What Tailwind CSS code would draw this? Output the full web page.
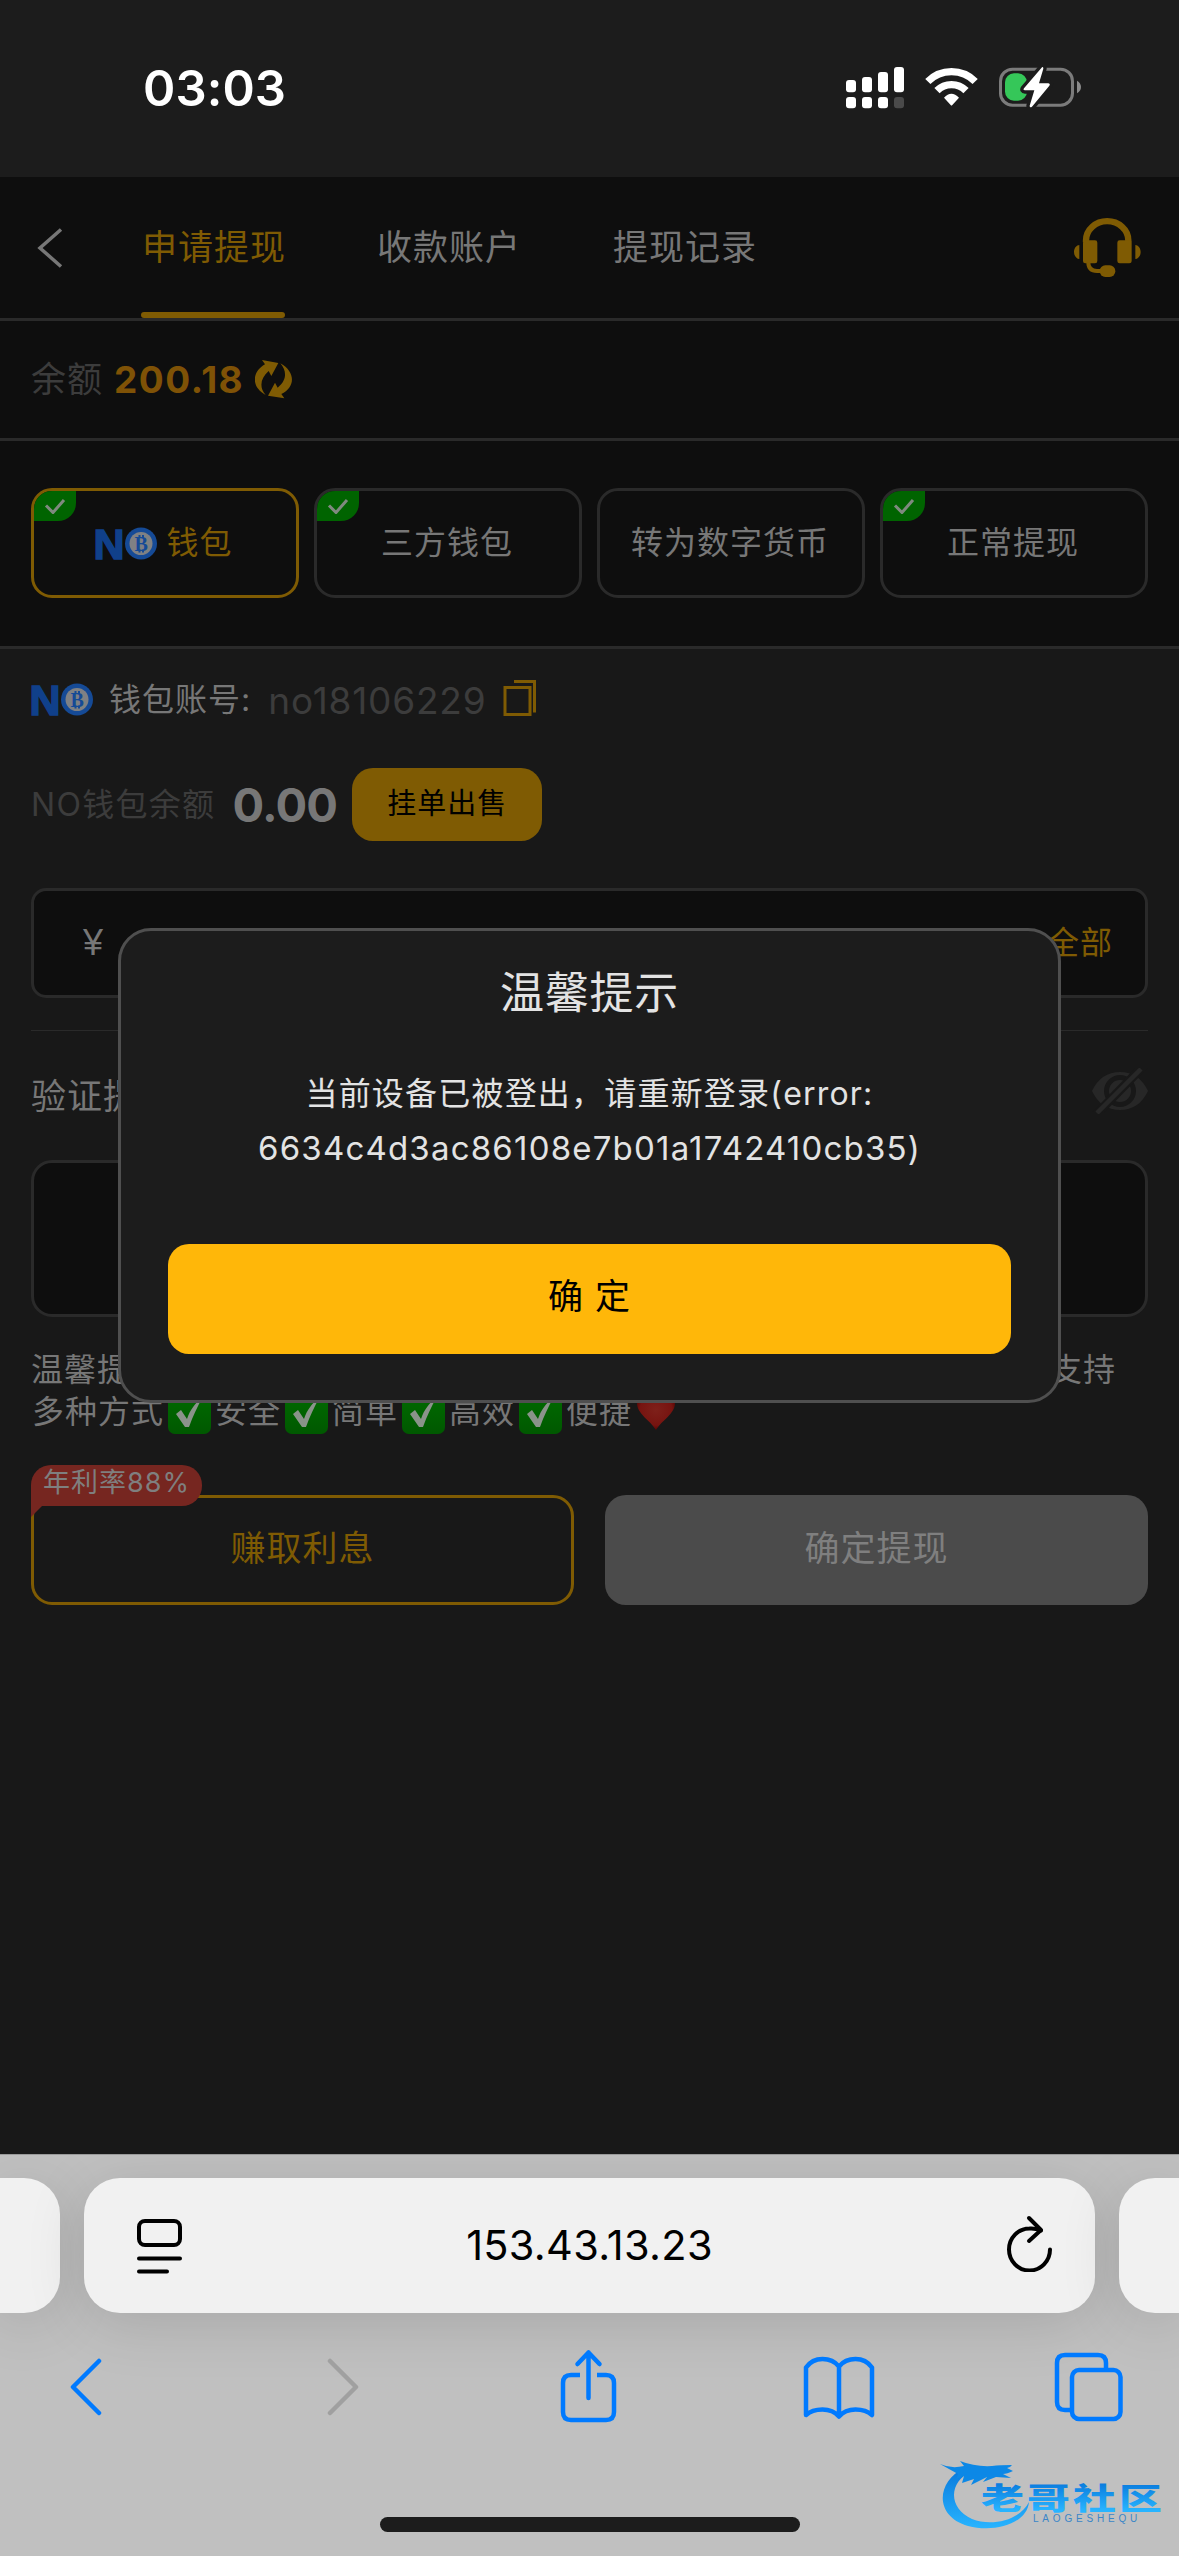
<!DOCTYPE html>
<html lang="zh-CN">
<head>
<meta charset="utf-8">
<title>申请提现</title>
<script src="https://cdn.jsdelivr.net/npm/@tailwindcss/browser@4"></script>
</head>
<body class="w-[1179px] h-[2556px] overflow-hidden bg-[#181818] font-['Inter','Noto_Sans_CJK_SC',sans-serif] leading-none text-[#777777] whitespace-nowrap">
<svg class="absolute h-0 w-0">
  <defs>
    <linearGradient id="green" x1="0" y1="0" x2="0" y2="1"><stop offset="0" stop-color="#006c00"/><stop offset="1" stop-color="#005800"/></linearGradient>
    <radialGradient id="red" cx=".5" cy=".45" r=".6"><stop offset="0" stop-color="#7e201a"/><stop offset=".7" stop-color="#771410"/><stop offset="1" stop-color="#4c0000"/></radialGradient>
    <linearGradient id="blue" x1="0" y1="0" x2="0" y2="1"><stop offset="0" stop-color="#0878dc"/><stop offset="1" stop-color="#28b4ff"/></linearGradient>
    <linearGradient id="title-blue" gradientUnits="userSpaceOnUse" x1="0" y1="-30" x2="0" y2="2"><stop offset="0" stop-color="#0878dc"/><stop offset="1" stop-color="#28b4ff"/></linearGradient>
    <symbol id="no-logo" viewBox="0 0 62 33">
      <text x="-1.5" y="31.5" font-family="Liberation Sans" font-weight="700" font-size="43" letter-spacing="0" textLength="31" lengthAdjust="spacingAndGlyphs" fill="#10408a" stroke="#10408a" stroke-width="1.6">N</text>
      <circle cx="46" cy="16.5" r="16" fill="#154a96"/>
      <circle cx="46" cy="16.5" r="11.500" fill="#7f8184"/>
      <text x="39.6" y="23.5" font-family="Liberation Serif" font-weight="700" font-size="20" fill="#154a96">B</text>
      <path d="M44.500 8v3M48 8v3M44.500 22.500v3M48 22.500v3" stroke="#154a96" stroke-width="2"/>
    </symbol>
    <symbol id="emoji-check" viewBox="0 0 43 43"><rect width="43" height="43" rx="7" fill="url(#green)"/><path d="M8 23l5-4 6 9C22 19 27 12 35 6c-6 10-10 19-14 30h-4z" fill="#8a938a"/></symbol>
  </defs>
</svg>

<!-- status bar -->
<div class="flex h-[177px] items-center bg-[#1c1c1c] pl-[143px] text-white">
  <div class="w-[703px] text-[49px] font-semibold tracking-[0.1px]">03:03</div>
  <svg class="mb-[1px] h-[42px] w-[59px]" viewBox="78 80 177 126" fill="#fff">
    <rect x="78" y="119" width="30" height="37" rx="9"/><rect x="126" y="110" width="30" height="46" rx="9"/><rect x="174" y="95" width="30" height="61" rx="9"/><rect x="222" y="80" width="30" height="76" rx="9"/>
    <rect x="78" y="170" width="30" height="34" rx="9"/><rect x="126" y="170" width="30" height="34" rx="9"/><rect x="174" y="170" width="30" height="34" rx="9"/><rect x="222" y="170" width="30" height="34" rx="9" fill="#4a4a4a"/>
  </svg>
  <svg class="mb-[3px] ml-[20px] h-[40px] w-[53px]" viewBox="315 83 159 120">
    <g fill="none" stroke="#fff" stroke-width="22"><path d="M323.500 126.500A100 100 0 0 1 465.500 126.500"/><path d="M351 154A61 61 0 0 1 438 154"/></g>
    <path d="M372 175q22-24 45 0L397 197q-3 3-5 0z" fill="#fff"/>
  </svg>
  <svg class="mb-[3px] ml-[20px] h-[42px] w-[84px]" viewBox="534 79 252 126">
    <rect x="541.500" y="88.500" width="216" height="108" rx="36" fill="none" stroke="#7b7b7b" stroke-width="9"/>
    <rect x="555" y="101" width="66" height="82" rx="27" fill="#35c759"/>
    <path d="M771 123q12 7 12 19t-12 19z" fill="#8a8a8a"/>
    <path d="M666 83L612 146q-4 6 3 6h28l-14 46q0 8 7 3L688 138q4-6-3-7h-28l13-44q0-8-4-4z" fill="#fff" stroke="#1c1c1c" stroke-width="20" stroke-linejoin="round"/>
    <path d="M666 83L612 146q-4 6 3 6h28l-14 46q0 8 7 3L688 138q4-6-3-7h-28l13-44q0-8-4-4z" fill="#fff"/>
  </svg>
</div>

<!-- page header -->
<header class="flex h-[144px] items-stretch border-b-3 border-[#2a2a2a] bg-[#0e0e0e] pl-[37px] text-[35px] tracking-[1px]">
  <svg class="mt-[51px] h-[40px] w-[26px]" viewBox="0 0 26 40" fill="none" stroke="#777777" stroke-width="3.500"><path d="M24 1.500L3 20l21 18.500"/></svg>
  <div class="ml-[78px] flex w-[144px] flex-col justify-between text-[#7f5b03]"><span class="pl-[1px] pt-[53px]">申请提现</span><div class="h-[6px] rounded-full bg-[#7f5b03]"></div></div>
  <div class="ml-[92px] pt-[53px]">收款账户</div>
  <div class="ml-[92px] pt-[53px]">提现记录</div>
  <svg class="mt-[40px] ml-[315px] h-[62px] w-[70px]" viewBox="755 530 210 186" fill="#7f5b03">
    <path d="M797 606v-6a63 57 0 0 1 127 0v6" fill="none" stroke="#7f5b03" stroke-width="19"/>
    <rect x="788" y="600" width="43" height="69" rx="7"/><rect x="891" y="600" width="43" height="69" rx="7"/>
    <path d="M777 614v42c-8 0-16-9-16-21s8-21 16-21zM945 614v42c8 0 16-9 16-21s-8-21-16-21z"/>
    <path d="M804 666q0 26 26 26h20" fill="none" stroke="#7f5b03" stroke-width="12"/>
    <rect x="838" y="675" width="47" height="35" rx="17"/>
  </svg>
</header>

<!-- balance -->
<section class="flex h-[120px] items-center border-b-3 border-[#2a2a2a] bg-[#0e0e0e] pl-[31px]">
  <span class="text-[35px] tracking-[1px] text-[#3c3c3c]">余额</span>
  <span class="ml-[11px] text-[37px] font-bold tracking-[1.5px] text-[#7f5206]">200.18</span>
  <svg class="ml-[11px] h-[39px] w-[37px]" viewBox="692 29 111 117" fill="#7f5b03">
    <path d="M713 29L762 38 741 77 733 62C708 84 704 111 724 134 678 109 684 63 722 42z"/>
    <path d="M780 144L731 136 752 97 760 112C788 90 788 62 768 39 816 66 812 112 771 131z"/>
  </svg>
</section>

<!-- withdrawal methods -->
<section class="flex h-[208px] items-start gap-[15px] border-b-3 border-[#2a2a2a] bg-[#0e0e0e] px-[31px] pt-[47px] text-[32px] tracking-[1px]">
  <div class="relative flex h-[110px] flex-1 items-center justify-center gap-[9px] rounded-[21px] border-3 border-[#7f5b03] pr-[2px] text-[#7f5b03]">
    <div class="absolute left-0 top-0 flex h-[30px] w-[42px] items-center justify-center rounded-br-[18px] rounded-tl-[18px] bg-[#006400]"><svg class="h-[16px] w-[22px]" viewBox="0 0 22 16" fill="none" stroke="#7f8a7f" stroke-width="3"><path d="M2 7.500l7 7L20 2"/></svg></div>
    <svg class="h-[33px] w-[62px]"><use href="#no-logo"/></svg><span>钱包</span>
  </div>
  <div class="relative flex h-[110px] flex-1 items-center justify-center rounded-[21px] border-3 border-[#2a2a2a] pr-[2px]">
    <div class="absolute left-0 top-0 flex h-[30px] w-[42px] items-center justify-center rounded-br-[18px] rounded-tl-[18px] bg-[#006400]"><svg class="h-[16px] w-[22px]" viewBox="0 0 22 16" fill="none" stroke="#7f8a7f" stroke-width="3"><path d="M2 7.500l7 7L20 2"/></svg></div>
    三方钱包
  </div>
  <div class="flex h-[110px] flex-1 items-center justify-center rounded-[21px] border-3 border-[#2a2a2a] pr-[2px]">转为数字货币</div>
  <div class="relative flex h-[110px] flex-1 items-center justify-center rounded-[21px] border-3 border-[#2a2a2a] pr-[2px]">
    <div class="absolute left-0 top-0 flex h-[30px] w-[42px] items-center justify-center rounded-br-[18px] rounded-tl-[18px] bg-[#006400]"><svg class="h-[16px] w-[22px]" viewBox="0 0 22 16" fill="none" stroke="#7f8a7f" stroke-width="3"><path d="M2 7.500l7 7L20 2"/></svg></div>
    正常提现
  </div>
</section>

<!-- form -->
<main class="flex h-[1505px] flex-col px-[31px] text-[32px] tracking-[1px]">
  <div class="mt-[29px] flex h-[44px] items-center">
    <svg class="mb-[1px] h-[33px] w-[62px]"><use href="#no-logo"/></svg>
    <span class="ml-[16px]">钱包账号:</span>
    <span class="ml-[17px] text-[37px] tracking-[0.8px] text-[#3c3c3c]">no18106229</span>
    <svg class="mb-[4px] ml-[17px] h-[36px] w-[33px]" viewBox="0 0 33 36" fill="none" stroke="#7f5b03" stroke-width="3"><rect x="2" y="7.500" width="25" height="27"/><path d="M11 1.500h20.500v31"/></svg>
  </div>
  <div class="mt-[46px] flex h-[73px] items-center">
    <span class="tracking-[1.3px] text-[#3c3c3c]">NO钱包余额</span>
    <span class="ml-[17px] text-[47px] font-bold tracking-[-0.8px]">0.00</span>
    <div class="ml-[15px] flex h-[73px] w-[190px] items-center justify-center rounded-[21px] bg-[#7f5b03] pb-[3px] text-[29px] text-black">挂单出售</div>
  </div>
  <div class="mt-[47px] flex h-[110px] items-center justify-between rounded-[15px] border-3 border-[#2a2a2a] bg-[#0e0e0e] pl-[49px] pr-[32px]"><span class="font-['Liberation_Sans'] text-[36px]">¥</span><span class="text-[#7f5b03]">全部</span></div>
  <div class="mt-[32px] h-[1px] bg-[#2a2a2a]"></div>
  <div class="flex h-[129px] items-center justify-between text-[34px]">
    <span class="pt-[2px] text-[35px]">验证提现密码</span>
    <svg class="mb-[10px] h-[46px] w-[56px]" viewBox="0 0 56 46"><path d="M0 23Q9 4 28 4T56 23Q47 42 28 42T0 23z" fill="#272727"/><circle cx="28" cy="23" r="13.500" fill="none" stroke="#181818" stroke-width="5"/><path d="M10 44L54 -1M1 46L46 0" stroke="#181818" stroke-width="4"/><path d="M5 45L49 1" stroke="#272727" stroke-width="4.500"/></svg>
  </div>
  <div class="h-[157px] rounded-[21px] border-3 border-[#2a2a2a] bg-[#0e0e0e]"></div>
  <div class="mt-[32px] flex h-[42px] items-center justify-between pr-[32px]"><span>温馨提示：</span><span>支持</span></div>
  <div class="flex h-[42px] items-center pl-[1px]">
    <span>多种方式</span><svg class="mx-[4px] h-[43px] w-[43px]"><use href="#emoji-check"/></svg>
    <span>安全</span><svg class="mx-[4px] h-[43px] w-[43px]"><use href="#emoji-check"/></svg>
    <span>简单</span><svg class="mx-[4px] h-[43px] w-[43px]"><use href="#emoji-check"/></svg>
    <span>高效</span><svg class="mx-[4px] h-[43px] w-[43px]"><use href="#emoji-check"/></svg>
    <span>便捷</span><svg class="ml-[4px] h-[40px] w-[40px]" viewBox="0 0 40 40"><path d="M20 38C14 28 1 22 1 11 1-1 16-1 20 8 24-1 39-1 39 11 39 22 26 28 20 38z" fill="url(#red)"/></svg>
  </div>
  <div class="mt-[62px] flex gap-[31px] text-[35px]">
    <div class="relative flex h-[110px] w-[543px] items-center justify-center rounded-[21px] border-3 border-[#7f5b03] pb-[3px] text-[#7f5b03]">
      赚取利息
      <svg class="absolute -left-[3px] top-[5px] h-[14px] w-[12px]" viewBox="0 0 12 14"><path d="M0 0h12v2L0 14z" fill="#762620"/></svg>
      <div class="absolute -left-[3px] -top-[33px] flex h-[41px] w-[171px] items-center justify-center rounded-r-[20px] rounded-tl-[20px] bg-[#762620] pb-[6px] text-[27px] text-[#7f7f7f]">年利率88%</div>
    </div>
    <div class="flex h-[110px] w-[543px] items-center justify-center rounded-[21px] bg-[#4b4b4b] pb-[3px] text-[#7f7f7f]">确定提现</div>
  </div>
</main>

<!-- browser toolbar -->
<footer class="flex h-[402px] flex-col overflow-hidden border-t border-[#999999] bg-[#c0c0c0]">
  <div class="mt-[23px] flex h-[135px] shrink-0 gap-[24px]">
    <div class="w-[60px] rounded-r-[36px] bg-[#f1f1f1] shadow-[0_10px_60px_rgba(0,0,0,0.13)]"></div>
    <div class="flex w-[1011px] items-center justify-between rounded-[36px] bg-[#f1f1f1] pl-[52px] pr-[42px] text-black shadow-[0_10px_60px_rgba(0,0,0,0.13)]">
      <svg class="h-[56px] w-[48px]" viewBox="0 0 48 56" fill="none" stroke="#000" stroke-width="4" stroke-linecap="round"><rect x="3" y="3" width="41" height="24" rx="6"/><path d="M3 40.500h41M3 53.500h28"/></svg>
      <span class="mr-[10px] text-[41.5px] tracking-[0.3px]">153.43.13.23</span>
      <svg class="mb-[6px] h-[58px] w-[48px]" viewBox="0 0 48 58" fill="none" stroke="#000" stroke-width="4" stroke-linecap="round" stroke-linejoin="round"><path d="M45 35.500A20.500 21 0 1 1 24.500 14.500Q30 14 36 16.500"/><path d="M24 4L36 16L24 27"/></svg>
    </div>
    <div class="w-[60px] rounded-l-[36px] bg-[#f1f1f1] shadow-[0_10px_60px_rgba(0,0,0,0.13)]"></div>
  </div>
  <div class="mt-[36px] flex h-[76px] items-center pl-[69px]">
    <svg class="h-[58px] w-[34px]" viewBox="0 0 34 58" fill="none" stroke="#007aff" stroke-width="4.500" stroke-linecap="round" stroke-linejoin="round"><path d="M30 3L4 29L30 55"/></svg>
    <svg class="ml-[223px] h-[58px] w-[34px]" viewBox="0 0 34 58" fill="none" stroke="#a0a0a0" stroke-width="4.500" stroke-linecap="round" stroke-linejoin="round"><path d="M4 3L30 29L4 55"/></svg>
    <svg class="mb-[2px] ml-[198px] h-[74px] w-[60px]" viewBox="0 0 60 74" fill="none" stroke="#007aff" stroke-width="4.500" stroke-linecap="round" stroke-linejoin="round"><path d="M22 26h-9q-8 0-8 8v29q0 8 8 8h35q8 0 8-8V34q0-8-8-8h-9" stroke-linecap="butt"/><path d="M30.500 49V3.500M19.500 15L30.500 3.500L41.500 15"/></svg>
    <svg class="ml-[184px] h-[64px] w-[74px]" viewBox="0 0 74 64" fill="none" stroke="#007aff" stroke-width="4.500" stroke-linecap="round" stroke-linejoin="round"><path d="M37 11.500Q31 4 20.500 4T4 12.500V60Q10 54.500 20.500 54.500T37 61.500Q43 54.500 53.500 54.500T70 60V12.500Q64 4 53.500 4T37 11.500V61"/></svg>
    <svg class="ml-[178px] h-[70px] w-[70px]" viewBox="0 0 70 70" fill="none" stroke="#007aff" stroke-width="4.500"><rect x="18" y="18" width="48.500" height="49" rx="7"/><path d="M18 58h-7q-8 0-8-8V11q0-8 8-8h33q8 0 8 8v7"/></svg>
  </div>
  <div class="relative mt-[44px] h-[87px] shrink-0">
    <svg class="absolute -top-[13px] left-[930px] h-[80px] w-[249px]" viewBox="0 16 249 80">
      <path d="M34 28C6 42 4 76 38 86 64 93 97 84 99 62 90 80 62 87 42 79 18 68 18 42 42 31z" fill="url(#blue)"/>
      <path d="M10 24q11 5 24 2l-4-5q15 6 32 5 8-1 20-1-2 3-5 3l6 3q-6 3-10 3l8 4-15-1-13 5 4-5-16 8 3-6-12 4 2-7-8 3 2-5z" fill="#0c88e6"/>
      <text transform="translate(51 68.500) scale(1.300 .9)" font-family="Noto Sans CJK SC" font-weight="900" font-size="33" letter-spacing="2.400" fill="url(#title-blue)">老哥社区</text>
      <text x="103" y="82" font-family="Liberation Sans" font-size="10" letter-spacing="3.800" fill="#3a86c8">LAOGESHEQU</text>
    </svg>
    <div class="absolute left-[380px] top-[48px] h-[15px] w-[420px] rounded-full bg-[#1c1c1c]"></div>
  </div>
</footer>

<!-- dialog -->
<div class="absolute left-[118px] top-[928px] flex h-[475px] w-[943px] flex-col items-center rounded-[33px] border-3 border-[#4f4f4f] bg-[#1c1c1c] text-[#e3e3e3]">
  <div class="mt-[40px] text-[44px] tracking-[0.7px]">温馨提示</div>
  <div class="mt-[52px] text-center text-[32px] leading-[54px] tracking-[1.2px]">当前设备已被登出，请重新登录(error:<br><span class="text-[33px] tracking-[1.2px]">6634c4d3ac86108e7b01a1742410cb35)</span></div>
  <div class="mt-[68px] flex h-[110px] w-[843px] items-center justify-center rounded-[21px] bg-[#ffb709] pb-[5px] text-[35px] tracking-[1px] text-black">确 定</div>
</div>
</body>
</html>
